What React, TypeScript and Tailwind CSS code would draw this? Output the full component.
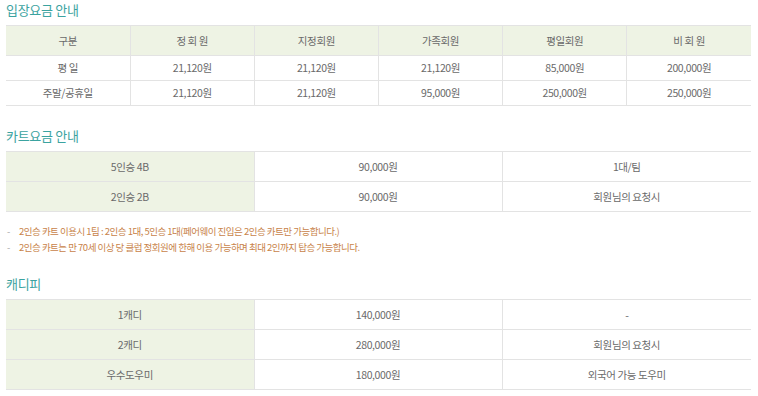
import React from "react";

const font = { fontFamily: '"Noto Sans CJK KR", "Noto Sans", sans-serif' };

function Title({ children, className = "" }: { children: React.ReactNode; className?: string }) {
  return (
    <div className={"h-[20px] flex items-center text-[13px] tracking-[-0.3px] text-[#3ba3a0] mb-[5px] " + className}>
      {children}
    </div>
  );
}

const cell = "border border-[#e3e3e3] text-center text-[10.5px] tracking-[-0.4px] text-[#6a6a6a] font-normal";

export default function App() {
  const headers = ["구분", "정 회 원", "지정회원", "가족회원", "평일회원", "비 회 원"];
  const rows = [
    ["평 일", "21,120원", "21,120원", "21,120원", "85,000원", "200,000원"],
    ["주말/공휴일", "21,120원", "21,120원", "95,000원", "250,000원", "250,000원"],
  ];
  const carts = [
    ["5인승 4B", "90,000원", "1대/팀"],
    ["2인승 2B", "90,000원", "회원님의 요청시"],
  ];
  const caddies = [
    ["1캐디", "140,000원", "-"],
    ["2캐디", "280,000원", "회원님의 요청시"],
    ["우수도우미", "180,000원", "외국어 가능 도우미"],
  ];
  return (
    <div style={font} className="w-[758px] h-[396px] bg-white pl-[6px] pr-[7px] overflow-hidden">
      <Title>입장요금 안내</Title>
      <table className="w-[745px] border-collapse table-fixed">
        <thead>
          <tr className="h-[30px] bg-[#eef3e4]">
            {headers.map((h, i) => (
              <th key={i} className={cell + (i === 0 ? " border-l-0" : "") + (i === 5 ? " border-r-0" : "")}>
                {h}
              </th>
            ))}
          </tr>
        </thead>
        <tbody>
          {rows.map((r, ri) => (
            <tr key={ri} className="h-[25px]">
              {r.map((c, i) => (
                <td key={i} className={cell + (i === 0 ? " border-l-0" : "") + (i === 5 ? " border-r-0" : "")}>
                  {c}
                </td>
              ))}
            </tr>
          ))}
        </tbody>
      </table>

      <Title className="mt-[20px]">카트요금 안내</Title>
      <table className="w-[745px] border-collapse table-fixed">
        <tbody>
          {carts.map((r, ri) => (
            <tr key={ri} className="h-[30px]">
              {r.map((c, i) => (
                <td
                  key={i}
                  className={
                    cell +
                    (i === 0 ? " border-l-0 bg-[#eef3e4] w-[248px]" : "") +
                    (i === 1 ? " w-[248px]" : "") +
                    (i === 2 ? " border-r-0" : "")
                  }
                >
                  {c}
                </td>
              ))}
            </tr>
          ))}
        </tbody>
      </table>

      <div className="mt-[11px] text-[9.5px] leading-[16px] text-[#c8834a] tracking-[-0.5px]">
        <div className="flex">
          <span className="w-[13px] pl-[1px] text-[#aaa]">-</span>
          <span>2인승 카트 이용시 1팀 : 2인승 1대, 5인승 1대(페어웨이 진입은 2인승 카트만 가능합니다.)</span>
        </div>
        <div className="flex">
          <span className="w-[13px] pl-[1px] text-[#aaa]">-</span>
          <span>2인승 카트는 만 70세 이상 당 클럽 정회원에 한해 이용 가능하며 최대 2인까지 탑승 가능합니다.</span>
        </div>
      </div>

      <Title className="mt-[19px]">캐디피</Title>
      <table className="w-[745px] border-collapse table-fixed">
        <tbody>
          {caddies.map((r, ri) => (
            <tr key={ri} className="h-[30px]">
              {r.map((c, i) => (
                <td
                  key={i}
                  className={
                    cell +
                    (i === 0 ? " border-l-0 bg-[#eef3e4] w-[248px]" : "") +
                    (i === 1 ? " w-[248px]" : "") +
                    (i === 2 ? " border-r-0" : "")
                  }
                >
                  {c}
                </td>
              ))}
            </tr>
          ))}
        </tbody>
      </table>
    </div>
  );
}
